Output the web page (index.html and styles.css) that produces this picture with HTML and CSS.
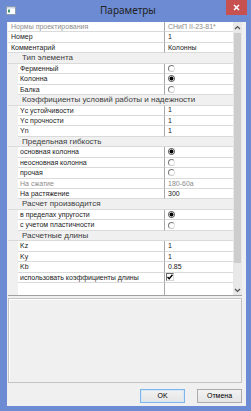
FILE: index.html
```html
<!DOCTYPE html>
<html lang="ru">
<head>
<meta charset="utf-8">
<title>Параметры</title>
<link rel="stylesheet" href="styles.css">
</head>
<body>
<div class="window">
  <div class="titlebar">
    <svg class="appicon" width="10" height="9" viewBox="0 0 10 9">
      <rect x="0.5" y="0.5" width="9" height="8" fill="#fff" stroke="#8b9bb3"/>
      <rect x="1" y="1" width="8" height="1.5" fill="#c9d6ea"/>
      <rect x="2" y="3.5" width="2" height="3" fill="#3f9a74"/>
    </svg>
    <div class="title">Параметры</div>
    <div class="close">
      <svg width="7" height="7" viewBox="0 0 7 7"><path d="M1 1L6 6M6 1L1 6" stroke="#fff" stroke-width="1.5"/></svg>
    </div>
  </div>
  <div class="client">
    <div class="grid">
      <div class="rows">
        <div class="row plain disabled"><span class="name">Нормы проектирования</span><span class="val">СНиП II-23-81*</span></div>
        <div class="row plain"><span class="name">Номер</span><span class="val">1</span></div>
        <div class="row plain"><span class="name">Комментарий</span><span class="val">Колонны</span></div>

        <div class="cat">Тип элемента</div>
        <div class="row"><span class="name">Ферменный</span><span class="val"><i class="radio"></i></span></div>
        <div class="row"><span class="name">Колонна</span><span class="val"><i class="radio on"></i></span></div>
        <div class="row"><span class="name">Балка</span><span class="val"><i class="radio"></i></span></div>

        <div class="cat">Коэффициенты условий работы и надежности</div>
        <div class="row"><span class="name">Yc устойчивости</span><span class="val">1</span></div>
        <div class="row"><span class="name">Yc прочности</span><span class="val">1</span></div>
        <div class="row"><span class="name">Yn</span><span class="val">1</span></div>

        <div class="cat">Предельная гибкость</div>
        <div class="row"><span class="name">основная колонна</span><span class="val"><i class="radio on"></i></span></div>
        <div class="row"><span class="name">неосновная колонна</span><span class="val"><i class="radio"></i></span></div>
        <div class="row"><span class="name">прочая</span><span class="val"><i class="radio"></i></span></div>
        <div class="row disabled"><span class="name">На сжатие</span><span class="val">180-60a</span></div>
        <div class="row"><span class="name">На растяжение</span><span class="val">300</span></div>

        <div class="cat">Расчет производится</div>
        <div class="row"><span class="name">в пределах упругости</span><span class="val"><i class="radio on"></i></span></div>
        <div class="row"><span class="name">с учетом пластичности</span><span class="val"><i class="radio"></i></span></div>

        <div class="cat">Расчетные длины</div>
        <div class="row"><span class="name">Kz</span><span class="val">1</span></div>
        <div class="row"><span class="name">Ky</span><span class="val">1</span></div>
        <div class="row"><span class="name">Kb</span><span class="val">0.85</span></div>
        <div class="row"><span class="name">использовать коэффициенты длины</span><span class="val"><i class="check"><svg width="6" height="6" viewBox="0 0 6 6"><path d="M0.5 3L2.2 4.8L5.5 0.8" fill="none" stroke="#000" stroke-width="1.4"/></svg></i></span></div>
        <div class="row blank"><span class="name"></span><span class="val"></span></div>
      </div>
      <div class="scrollbar">
        <div class="arrow"><svg width="7" height="5" viewBox="0 0 7 5"><path d="M1 4L3.5 1.5L6 4" fill="none" stroke="#505050" stroke-width="1.2"/></svg></div>
        <div class="track"><div class="thumb"></div></div>
        <div class="arrow"><svg width="7" height="5" viewBox="0 0 7 5"><path d="M1 1L3.5 3.5L6 1" fill="none" stroke="#505050" stroke-width="1.2"/></svg></div>
      </div>
    </div>
    <div class="desc"></div>
    <div class="buttons">
      <button class="btn default">OK</button>
      <button class="btn">Отмена</button>
    </div>
  </div>
</div>
</body>
</html>
```

FILE: styles.css
```css
html, body {
  margin: 0;
  padding: 0;
}
body {
  width: 251px;
  height: 411px;
  overflow: hidden;
  background: #6d8bd3;
  font-family: "Liberation Sans", Arial, sans-serif;
}
.window {
  width: 251px;
  height: 411px;
  display: flex;
  flex-direction: column;
  background: #6d8bd3;
}
.titlebar {
  height: 22px;
  flex: none;
  display: flex;
  align-items: flex-start;
}
.appicon {
  margin: 6px 0 0 6px;
  flex: none;
}
.title {
  flex: 1;
  text-align: center;
  font-family: "Noto Sans", "Open Sans", sans-serif;
  font-size: 10px;
  line-height: 21px;
  color: #222;
  padding-left: 14px;
}
.close {
  width: 21px;
  height: 15px;
  margin: 0 4px 0 0;
  background: #c75050;
  display: flex;
  align-items: center;
  justify-content: center;
  flex: none;
}
.client {
  flex: 1;
  margin: 0 5px 5px 7px;
  background: #f0f0f0;
  display: flex;
  flex-direction: column;
  padding: 0 4px 0 1px;
}
.grid {
  height: 273px;
  flex: none;
  display: flex;
  border-bottom: 1px solid #a0a0a0;
}
.rows {
  flex: 1;
  display: flex;
  flex-direction: column;
  background: #f0f0f0;
}
.row {
  height: 10.44px;
  flex: none;
  display: flex;
  padding-left: 10px;
  font-size: 7px;
  color: #1a1a1a;
  box-sizing: border-box;
}
.row .name {
  width: 146px;
  flex: none;
  background: #fff;
  border-bottom: 1px solid #dadada;
  padding-left: 2px;
  line-height: 9.5px;
  white-space: nowrap;
  overflow: hidden;
  box-sizing: border-box;
}
.row .val {
  flex: 1;
  background: #fff;
  border-left: 1px solid #a8a8a8;
  border-bottom: 1px solid #dadada;
  padding-left: 3px;
  line-height: 9.5px;
  white-space: nowrap;
  display: flex;
  align-items: center;
  box-sizing: border-box;
}
.row.plain {
  padding-left: 0;
}
.row.plain .name {
  width: 156px;
  padding-left: 3px;
}
.row.disabled {
  color: #8c8c8c;
}
.row.blank {
  flex: 1;
}
.row.blank .name, .row.blank .val {
  border-bottom: none;
}
.cat {
  height: 10.44px;
  flex: none;
  box-sizing: border-box;
  background: #f0f0f0;
  border-bottom: 1px solid #dadada;
  font-size: 8px;
  line-height: 10px;
  color: #3c3c3c;
  padding-left: 14px;
  white-space: nowrap;
}
.radio {
  display: block;
  width: 7px;
  height: 7px;
  box-sizing: border-box;
  border-radius: 50%;
  border: 1px solid #7a7a7a;
  border-right-color: #e0e0e0;
  border-bottom-color: #c8c8c8;
  background: #fff;
  margin-left: 0;
}
.radio.on {
  border-color: #404040;
  background: radial-gradient(circle, #000 0 1.8px, #fff 2.2px);
}
.check {
  display: flex;
  align-items: center;
  justify-content: center;
  width: 8px;
  height: 8px;
  box-sizing: border-box;
  border: 1px solid #6a6a6a;
  border-right-color: #d8d8d8;
  border-bottom-color: #d8d8d8;
  background: #fff;
  margin-left: -2px;
}
.scrollbar {
  width: 9px;
  flex: none;
  display: flex;
  flex-direction: column;
  background: #e8e8e8;
}
.arrow {
  height: 10px;
  flex: none;
  display: flex;
  align-items: center;
  justify-content: center;
}
.track {
  flex: 1;
  display: flex;
  flex-direction: column;
  padding: 1px 1px 0;
}
.thumb {
  height: 230px;
  background: #cdcdcd;
}
.desc {
  height: 85px;
  flex: none;
  margin-top: 2px;
  box-sizing: border-box;
  border: 1px solid #c4c4c4;
  box-shadow: inset 1px 1px 0 #fff;
  background: #f0f0f0;
}
.buttons {
  display: flex;
  justify-content: flex-end;
  gap: 12px;
  padding-top: 6px;
}
.btn {
  width: 45px;
  height: 14px;
  padding: 0;
  margin: 0;
  box-sizing: border-box;
  border: 1px solid #acacac;
  background: linear-gradient(#f2f2f2, #e5e5e5);
  font-family: "Liberation Sans", Arial, sans-serif;
  font-size: 7px;
  color: #000;
  line-height: 12px;
}
.btn.default {
  border-color: #7eb4ea;
  box-shadow: inset 0 0 0 1px #d6e8f8;
}
```
